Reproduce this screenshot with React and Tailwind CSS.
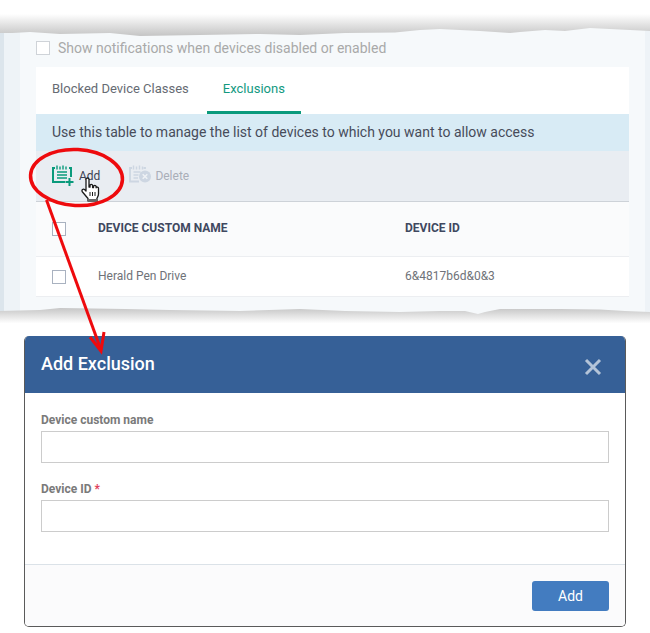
const AddIcon = () => (
  <svg width="22" height="22" viewBox="0 0 22 22" fill="none" stroke="#0a9a7c" strokeWidth="2" className="shrink-0 mb-[3px]">
    <path d="M3 4H1v14h12M19 13V4h-2" />
    <path d="M5 1.5v4M8 2.5v3M11 1.5v4M14 2.5v3" strokeWidth="1.4" />
    <path d="M5 8h10M5 11h10M5 14h10" strokeWidth="1.5" />
    <path d="M17.5 14v8M13.5 18h8" strokeWidth="2" />
  </svg>
);

const DeleteIcon = () => (
  <svg width="22" height="22" viewBox="0 0 22 22" fill="none" stroke="#cdd6e2" strokeWidth="1.8" className="shrink-0 mb-[3px]">
    <path d="M3 4H1v13.5h9M16 5V4h-1.5" />
    <path d="M4.5 1.5v4M7.5 2.5v3M10.5 1.5v4M13.5 2.5v3" strokeWidth="1.4" />
    <path d="M4.5 8h7M4.5 11h5M4.5 14h4.5" strokeWidth="1.5" />
    <circle cx="16" cy="12.5" r="6" fill="#cdd6e2" stroke="none" />
    <path d="M13.7 10.2l4.6 4.6M18.3 10.2l-4.6 4.6" stroke="#eef1f5" strokeWidth="1.6" />
  </svg>
);

const Check = ({ className = "border-[#a9b2c0]" }) => (
  <span className={`block w-[14px] h-[14px] border bg-white ${className}`} />
);

const TopEdge = () => (
  <svg className="absolute left-0 top-0" width="650" height="40" viewBox="0 0 650 40">
    <defs>
      <linearGradient id="ts" x1="0" y1="0" x2="0" y2="1">
        <stop offset="0" stopColor="#ffffff" />
        <stop offset="1" stopColor="#c4c4c4" />
      </linearGradient>
    </defs>
    <path d="M0 14H650V31L630 30L610 29L590 28L565 31L545 30L520 32L510 33L480 31L440 29L420 30L395 32.5L345 33L300 35L260 34L200 35L140 36L110 33L60 34L30 32L12 33L0 33Z" fill="url(#ts)" />
  </svg>
);

const BottomEdge = () => (
  <svg className="absolute left-0 top-[300px]" width="650" height="30" viewBox="0 0 650 30">
    <defs>
      <linearGradient id="bs" x1="0" y1="0" x2="0" y2="1">
        <stop offset="0" stopColor="#c6c6c6" />
        <stop offset="0.7" stopColor="#ffffff" />
      </linearGradient>
    </defs>
    <path d="M0 11L40 10L60 8L125 9L170 10L240 11L300 9L345 11L400 12L440 11L465 11L478 14L485 12L500 9L560 9L600 9.5L625 11L650 12V30H0Z" fill="url(#bs)" />
  </svg>
);

const Annotation = () => (
  <svg className="absolute left-0 top-0 pointer-events-none" width="650" height="400" viewBox="0 0 650 400" fill="none" stroke="#ee0a0d">
    <ellipse cx="76.5" cy="177.5" rx="46" ry="28" strokeWidth="3.5" transform="rotate(3 76.5 177.5)" />
    <path d="M46.5 200L101 350" strokeWidth="3" />
    <path d="M90 337L101 351L104 332" strokeWidth="3" />
  </svg>
);

const Hand = () => (
  <svg className="absolute left-[81px] top-[177px]" width="19" height="26" viewBox="0 0 19 26">
    <path d="M5 2.5c0-2 3-2 3 0V10l1 .2V8.5c0-1.5 2.5-1.5 2.6 0v2l.9.2V9.5c0-1.5 2.5-1.5 2.6 0v1.3c0-1.2 2.4-1 2.4.5V17c0 2-1 3-1.6 4.5V24H7v-2.5L1.5 15c-1.5-2 .8-3.7 2.3-2.2L5 14Z" fill="#fff" stroke="#1a1a1a" strokeWidth="1.3" strokeLinejoin="round" />
    <path d="M9 15v4M11.5 15v4M14 15v4" stroke="#1a1a1a" strokeWidth="1" />
    <rect x="7" y="22" width="10" height="3" fill="#666" />
  </svg>
);

export default function App() {
  return (
    <div className="relative w-[650px] h-[633px] overflow-hidden bg-white font-['Roboto',sans-serif]">
      <div className="pt-[28px] pb-[13px]">
        <div className="h-[295px] bg-[#f6f9fb] flex">
          <div className="w-[4px] bg-[#dce5ec]" />
          <div className="w-[16px] bg-[#eef3f7]" />
          <div className="flex-1 pl-[16px] pr-[16px] pt-[5px]">
            <div className="h-[34px] flex items-center gap-[8px] pb-[4px]">
              <Check className="border-[#cfd3d8]" />
              <span className="text-[14px] text-[#a9a9a9]">Show notifications when devices disabled or enabled</span>
            </div>
            <div className="w-[593px] bg-white">
              <div className="h-[47px] flex items-stretch pl-[16px] text-[13px]">
                <div className="flex items-center pr-[18px] border-b-[3px] border-transparent text-[#666b73]">Blocked Device Classes</div>
                <div className="w-[94px] flex items-center justify-center text-[#12997f] border-b-[3px] border-[#0a9a7c]">Exclusions</div>
              </div>
              <div className="h-[37px] bg-[#d8ebf5] flex items-center pl-[16px] text-[14px] text-[#474b5a]">
                Use this table to manage the list of devices to which you want to allow access
              </div>
              <div className="h-[51px] bg-[#e9edf2] border-b border-[#cdd2d8] flex items-center pl-[16px] text-[12px]">
                <AddIcon />
                <span className="ml-[5px] text-[#3b4252]">Add</span>
                <span className="ml-[29px] w-[22px]"><DeleteIcon /></span>
                <span className="ml-[4px] text-[#a9aeb8]">Delete</span>
              </div>
              <div className="h-[55px] bg-[#fafbfc] border-b border-[#eceef1] flex items-center text-[12px] font-bold text-[#3f4860]">
                <div className="w-[62px] pl-[16px]"><Check /></div>
                <div className="w-[307px] pb-[2px]">DEVICE CUSTOM NAME</div>
                <div className="pb-[2px]">DEVICE ID</div>
              </div>
              <div className="h-[40px] border-b border-[#eceef1] flex items-center text-[12px] text-[#6f7278]">
                <div className="w-[62px] pl-[16px]"><Check /></div>
                <div className="w-[307px] pb-[2px]">Herald Pen Drive</div>
                <div className="pb-[2px]">6&amp;4817b6d&amp;0&amp;3</div>
              </div>
            </div>
          </div>
          <div className="w-[5px] bg-[#eef3f7]" />
        </div>
      </div>

      <div className="mx-[24px] w-[602px] h-[291px] flex flex-col rounded-[5px] overflow-hidden bg-white border-x border-b border-[#5a5a5a]">
        <div className="h-[57px] shrink-0 bg-[#366097] -mx-px flex items-center justify-between pl-[17px] pr-[24px] pb-[2px]">
          <span className="text-[18px] font-medium text-white">Add Exclusion</span>
          <svg width="18" height="18" viewBox="0 0 18 18" className="mt-[6px]" stroke="#b4c4d8" strokeWidth="3" fill="none">
            <path d="M2 2L16 16M16 2L2 16" />
          </svg>
        </div>
        <div className="flex-1 px-[16px] pt-[20px]">
          <div className="text-[12px] font-bold text-[#7a7a7a] leading-[14px] mb-[4px]">Device custom name</div>
          <div className="h-[32px] border border-[#cccccc] bg-white" />
          <div className="text-[12px] font-bold text-[#7a7a7a] leading-[14px] mt-[19px] mb-[4px]">
            Device ID <span className="text-[#e0405a]">*</span>
          </div>
          <div className="h-[32px] border border-[#cccccc] bg-white" />
        </div>
        <div className="h-[62px] shrink-0 bg-[#fbfbfc] border-t border-[#dbe2e8] flex items-center justify-end pr-[16px] pt-[1px]">
          <div className="w-[77px] h-[30px] rounded-[3px] bg-[#437cc0] flex items-center justify-center text-[14px] text-white">Add</div>
        </div>
      </div>

      <TopEdge />
      <BottomEdge />
      <Hand />
      <Annotation />
    </div>
  );
}
